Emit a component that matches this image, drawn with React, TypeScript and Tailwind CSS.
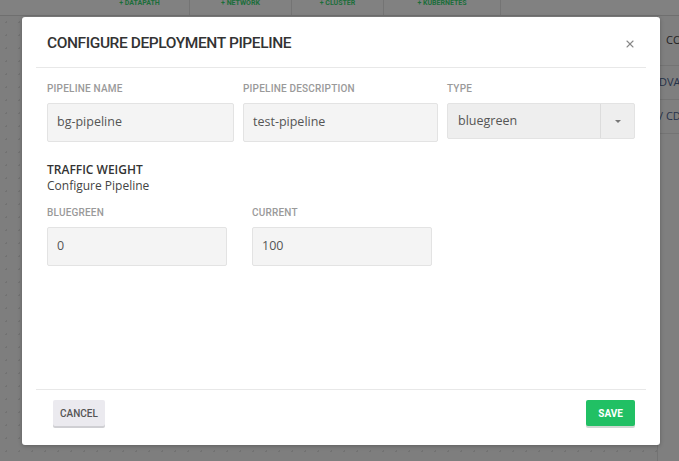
import { X } from "lucide-react";

const label = "text-[10px] font-medium uppercase tracking-[0.2px] text-[#9a9a9a] [font-family:Roboto,sans-serif]";
const input =
  "flex items-center rounded-[2px] border border-[#e3e3e3] bg-[#f4f4f4] px-[9px] text-[12.5px] text-[#555] [font-family:'Open_Sans',sans-serif]";

function Field({ name, value, width, height = "h-[39px]" }: { name: string; value: string; width: string; height?: string }) {
  return (
    <div className={`flex flex-col gap-[7px] ${width}`}>
      <span className={label}>{name}</span>
      <div className={`${input} ${height}`}>{value}</div>
    </div>
  );
}

function Background() {
  const nav = [
    { n: "DATAPATH", w: "w-[100px]" },
    { n: "NETWORK", w: "w-[102px]" },
    { n: "CLUSTER", w: "w-[92px]" },
    { n: "KUBERNETES", w: "w-[117px]" },
  ];
  return (
    <div className="flex h-full flex-col">
      <div className="flex h-[16px] shrink-0 items-end border-b border-[#6f6f6f] bg-[#818181] pl-[90px]">
        {nav.map((item) => (
          <div
            key={item.n}
            className={`flex h-full ${item.w} items-start justify-center overflow-hidden border-r border-[#747474] pt-[1px] text-[7px] font-bold leading-[4px] text-[#1b6e3a] [font-family:Roboto,sans-serif]`}
          >
            + {item.n}
          </div>
        ))}
      </div>
      <div className="flex flex-1">
        <div className="flex-1 bg-[#7e7e7e] [background-image:radial-gradient(#727272_1px,transparent_1px)] [background-size:13px_13px]" />
        <div className="flex w-[22px] flex-col overflow-hidden whitespace-nowrap border-l border-[#737373] bg-[#7f7f7f] text-[11px] text-[#26324a] [font-family:'Open_Sans',sans-serif]">
          <div className="flex h-[50px] items-center border-b border-[#747474] pl-[8px] text-[#222]">CO</div>
          <div className="flex h-[34px] items-center border-b border-[#747474] pl-[1px]">DVA</div>
          <div className="flex h-[34px] items-center border-b border-[#747474] pl-[1px]">/ CD</div>
        </div>
      </div>
    </div>
  );
}

export default function App() {
  return (
    <div className="relative h-[461px] w-[679px] overflow-hidden bg-[#7f7f7f]">
      <Background />
      <div className="absolute left-[22px] top-[17px] flex h-[428px] w-[638px] flex-col rounded-[3px] bg-white shadow-[0_1px_4px_rgba(0,0,0,0.25)]">
        <div className="mx-[14px] flex h-[51px] items-center justify-between border-b border-[#e8e8e8] pl-[11px] pr-[10px]">
          <h2 className="pt-[4px] text-[15.5px] font-medium tracking-[-0.4px] text-[#333] [font-family:Roboto,sans-serif]">
            CONFIGURE DEPLOYMENT PIPELINE
          </h2>
          <X className="mt-[4px] h-[12px] w-[12px] text-[#888]" strokeWidth={2.2} />
        </div>

        <div className="flex flex-1 flex-col px-[25px] pt-[13px]">
          <div className="flex gap-[9px]">
            <Field name="Pipeline Name" value="bg-pipeline" width="w-[187px]" />
            <Field name="Pipeline Description" value="test-pipeline" width="w-[195px]" />
            <div className="flex w-[188px] flex-col gap-[7px]">
              <span className={label}>Type</span>
              <div className="flex h-[36px] items-center rounded-[2px] border border-[#e3e3e3] bg-[#eeeeee] text-[12.5px] text-[#555] [font-family:'Open_Sans',sans-serif]">
                <span className="flex-1 pl-[10px]">bluegreen</span>
                <span className="flex h-full w-[34px] items-center justify-center border-l border-[#dcdcdc]">
                  <span className="h-0 w-0 border-x-[3px] border-t-[3px] border-x-transparent border-t-[#777]" />
                </span>
              </div>
            </div>
          </div>

          <div className="mt-[20px] flex flex-col [font-family:'Open_Sans',sans-serif]">
            <span className="text-[12px] font-semibold leading-[16px] text-[#333]">TRAFFIC WEIGHT</span>
            <span className="text-[12px] leading-[16px] text-[#444]">Configure Pipeline</span>
          </div>

          <div className="mt-[11px] flex gap-[25px]">
            <Field name="Bluegreen" value="0" width="w-[180px]" />
            <Field name="Current" value="100" width="w-[180px]" />
          </div>
        </div>

        <div className="mx-[14px] flex h-[56px] items-start justify-between border-t border-[#e8e8e8] pl-[17px] pr-[11px] pt-[10px] [font-family:Roboto,sans-serif]">
          <button className="h-[26px] rounded-[2px] bg-[#ebeaef] px-[7px] text-[10px] font-medium text-[#555] shadow-[0_2px_0_#cfcfd3]">
            CANCEL
          </button>
          <button className="h-[26px] rounded-[2px] bg-[#21c064] px-[12px] text-[10px] font-bold text-white shadow-[0_2px_0_#cfd8d2]">
            SAVE
          </button>
        </div>
      </div>
    </div>
  );
}
